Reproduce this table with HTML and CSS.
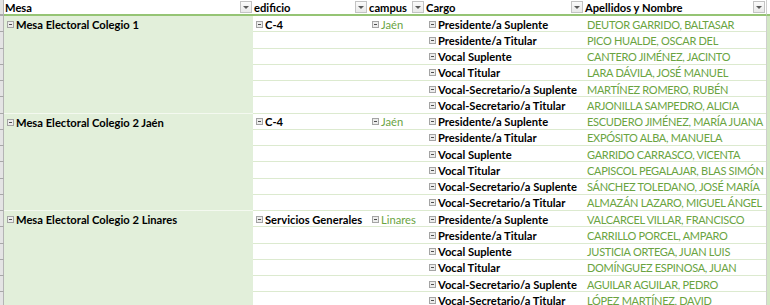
FILE: index.html
```html
<!DOCTYPE html>
<html lang="es">
<head>
<meta charset="utf-8">
<title>Mesas electorales</title>
<link rel="stylesheet" href="styles.css">
</head>
<body>
<div class="sheet">
  <div class="gut gut-h"></div>
  <div class="hd c-mesa"><span class="ht">Mesa</span><span class="dd"></span></div>
  <div class="hd c-edif"><span class="ht">edificio</span><span class="dd"></span></div>
  <div class="hd c-camp"><span class="ht">campus</span><span class="dd"></span></div>
  <div class="hd c-cargo"><span class="ht">Cargo</span><span class="dd"></span></div>
  <div class="hd c-name"><span class="ht">Apellidos y Nombre</span><span class="dd"></span></div>
  <div class="strip strip-h"></div>

  <!-- Grupo 1 -->
  <div class="gut"></div>
  <div class="mesa"><span class="tg"></span>Mesa Electoral Colegio 1</div>
  <div class="cell c-edif b"><span class="tg"></span>C-4</div>
  <div class="cell c-camp g"><span class="tg"></span>Jaén</div>
  <div class="cell c-cargo b"><span class="tg"></span>Presidente/a Suplente</div>
  <div class="cell c-name g">DEUTOR GARRIDO, BALTASAR</div>
  <div class="strip"></div>

  <div class="gut"></div>
  <div class="cell c-edif"></div><div class="cell c-camp"></div>
  <div class="cell c-cargo b"><span class="tg"></span>Presidente/a Titular</div>
  <div class="cell c-name g">PICO HUALDE, OSCAR DEL</div>
  <div class="strip"></div>

  <div class="gut"></div>
  <div class="cell c-edif"></div><div class="cell c-camp"></div>
  <div class="cell c-cargo b"><span class="tg"></span>Vocal Suplente</div>
  <div class="cell c-name g">CANTERO JIMÉNEZ, JACINTO</div>
  <div class="strip"></div>

  <div class="gut"></div>
  <div class="cell c-edif"></div><div class="cell c-camp"></div>
  <div class="cell c-cargo b"><span class="tg"></span>Vocal Titular</div>
  <div class="cell c-name g">LARA DÁVILA, JOSÉ MANUEL</div>
  <div class="strip"></div>

  <div class="gut"></div>
  <div class="cell c-edif"></div><div class="cell c-camp"></div>
  <div class="cell c-cargo b"><span class="tg"></span>Vocal-Secretario/a Suplente</div>
  <div class="cell c-name g">MARTÍNEZ ROMERO, RUBÉN</div>
  <div class="strip"></div>

  <div class="gut"></div>
  <div class="cell c-edif"></div><div class="cell c-camp"></div>
  <div class="cell c-cargo b"><span class="tg"></span>Vocal-Secretario/a Titular</div>
  <div class="cell c-name g">ARJONILLA SAMPEDRO, ALICIA</div>
  <div class="strip"></div>

  <!-- Grupo 2 -->
  <div class="gut"></div>
  <div class="mesa"><span class="tg"></span>Mesa Electoral Colegio 2 Jaén</div>
  <div class="cell c-edif b"><span class="tg"></span>C-4</div>
  <div class="cell c-camp g"><span class="tg"></span>Jaén</div>
  <div class="cell c-cargo b"><span class="tg"></span>Presidente/a Suplente</div>
  <div class="cell c-name g">ESCUDERO JIMÉNEZ, MARÍA JUANA</div>
  <div class="strip"></div>

  <div class="gut"></div>
  <div class="cell c-edif"></div><div class="cell c-camp"></div>
  <div class="cell c-cargo b"><span class="tg"></span>Presidente/a Titular</div>
  <div class="cell c-name g">EXPÓSITO ALBA, MANUELA</div>
  <div class="strip"></div>

  <div class="gut"></div>
  <div class="cell c-edif"></div><div class="cell c-camp"></div>
  <div class="cell c-cargo b"><span class="tg"></span>Vocal Suplente</div>
  <div class="cell c-name g">GARRIDO CARRASCO, VICENTA</div>
  <div class="strip"></div>

  <div class="gut"></div>
  <div class="cell c-edif"></div><div class="cell c-camp"></div>
  <div class="cell c-cargo b"><span class="tg"></span>Vocal Titular</div>
  <div class="cell c-name g">CAPISCOL PEGALAJAR, BLAS SIMÓN</div>
  <div class="strip"></div>

  <div class="gut"></div>
  <div class="cell c-edif"></div><div class="cell c-camp"></div>
  <div class="cell c-cargo b"><span class="tg"></span>Vocal-Secretario/a Suplente</div>
  <div class="cell c-name g">SÁNCHEZ TOLEDANO, JOSÉ MARÍA</div>
  <div class="strip"></div>

  <div class="gut"></div>
  <div class="cell c-edif"></div><div class="cell c-camp"></div>
  <div class="cell c-cargo b"><span class="tg"></span>Vocal-Secretario/a Titular</div>
  <div class="cell c-name g">ALMAZÁN LAZARO, MIGUEL ÁNGEL</div>
  <div class="strip"></div>

  <!-- Grupo 3 -->
  <div class="gut"></div>
  <div class="mesa"><span class="tg"></span>Mesa Electoral Colegio 2 Linares</div>
  <div class="cell c-edif b"><span class="tg"></span>Servicios Generales</div>
  <div class="cell c-camp g"><span class="tg"></span>Linares</div>
  <div class="cell c-cargo b"><span class="tg"></span>Presidente/a Suplente</div>
  <div class="cell c-name g">VALCARCEL VILLAR, FRANCISCO</div>
  <div class="strip"></div>

  <div class="gut"></div>
  <div class="cell c-edif"></div><div class="cell c-camp"></div>
  <div class="cell c-cargo b"><span class="tg"></span>Presidente/a Titular</div>
  <div class="cell c-name g">CARRILLO PORCEL, AMPARO</div>
  <div class="strip"></div>

  <div class="gut"></div>
  <div class="cell c-edif"></div><div class="cell c-camp"></div>
  <div class="cell c-cargo b"><span class="tg"></span>Vocal Suplente</div>
  <div class="cell c-name g">JUSTICIA ORTEGA, JUAN LUIS</div>
  <div class="strip"></div>

  <div class="gut"></div>
  <div class="cell c-edif"></div><div class="cell c-camp"></div>
  <div class="cell c-cargo b"><span class="tg"></span>Vocal Titular</div>
  <div class="cell c-name g">DOMÍNGUEZ ESPINOSA, JUAN</div>
  <div class="strip"></div>

  <div class="gut"></div>
  <div class="cell c-edif"></div><div class="cell c-camp"></div>
  <div class="cell c-cargo b"><span class="tg"></span>Vocal-Secretario/a Suplente</div>
  <div class="cell c-name g">AGUILAR AGUILAR, PEDRO</div>
  <div class="strip"></div>

  <div class="gut"></div>
  <div class="cell c-edif"></div><div class="cell c-camp"></div>
  <div class="cell c-cargo b"><span class="tg"></span>Vocal-Secretario/a Titular</div>
  <div class="cell c-name g">LÓPEZ MARTÍNEZ, DAVID</div>
  <div class="strip"></div>
</div>
</body>
</html>
```

FILE: styles.css
```css
html, body {
  margin: 0;
  padding: 0;
  background: #ffffff;
  overflow: hidden;
}

.sheet {
  display: grid;
  grid-template-columns: 4px 249px 115px 57px 159px 182px 4px;
  grid-template-rows: 16px repeat(18, 16.25px);
  width: 770px;
  font-family: Lato, "Open Sans", sans-serif;
  font-size: 11.2px;
  color: #000;
  white-space: nowrap;
}

/* left row-header gutter */
.gut {
  grid-column: 1;
  background: #e4e4e4;
  border-right: 1px solid #b4b4b4;
  border-bottom: 1px solid #a8a8a8;
  box-sizing: border-box;
}
.gut-h {
  border-bottom: 2px solid #a8a8a8;
}

/* right edge strip */
.strip {
  grid-column: 7;
  background: #d3e8c5;
  border-left: 1px solid #cfcfcf;
  box-sizing: border-box;
}
.strip-h {
  background: #fff;
  border-bottom: 2px solid #95c474;
}

/* header row */
.hd {
  display: flex;
  justify-content: space-between;
  align-items: flex-start;
  border-bottom: 2px solid #95c474;
  box-sizing: border-box;
  font-weight: 700;
  padding-left: 1px;
  padding-right: 1px;
}
.ht {
  line-height: 14px;
  padding-top: 1px;
}
.dd {
  width: 12px;
  height: 12px;
  margin-top: 1px;
  box-sizing: border-box;
  border: 1px solid #c3c3c3;
  background: linear-gradient(#fbfbfb, #e9e9e9);
  display: flex;
  align-items: center;
  justify-content: center;
}
.dd::after {
  content: "";
  width: 0;
  height: 0;
  border-left: 3px solid transparent;
  border-right: 3px solid transparent;
  border-top: 3px solid #5a5a5a;
}

.c-mesa { grid-column: 2; }
.c-edif { grid-column: 3; }
.c-camp { grid-column: 4; }
.c-cargo { grid-column: 5; }
.c-name { grid-column: 6; }

/* body cells */
.cell {
  display: flex;
  align-items: center;
  border-bottom: 1px solid #dceacf;
  box-sizing: border-box;
  padding-left: 3px;
  padding-top: 1px;
  line-height: 15px;
}
.c-camp.cell, .c-cargo.cell { padding-left: 4px; }
.c-name.cell {
  padding-left: 3px;
  font-size: 11px;
  letter-spacing: -0.3px;
}

.mesa {
  grid-column: 2;
  grid-row: span 6;
  background: #e2efda;
  border-bottom: 1px solid #f4f9f0;
  box-sizing: border-box;
  display: flex;
  align-items: flex-start;
  padding-left: 3px;
  padding-top: 1px;
  height: 100%;
  line-height: 15px;
  font-weight: 700;
}

.b { font-weight: 700; }
.g { color: #6aa43f; }

/* expand/collapse toggle */
.tg {
  width: 7px;
  height: 7px;
  box-sizing: border-box;
  border: 1px solid #a4a4a4;
  background: #ececec;
  margin-right: 2px;
  flex: none;
  display: flex;
  align-items: center;
  justify-content: center;
}
.mesa .tg { margin-top: 4px; }
.tg::after {
  content: "";
  width: 3px;
  height: 1px;
  background: #4d4d4d;
}
```
